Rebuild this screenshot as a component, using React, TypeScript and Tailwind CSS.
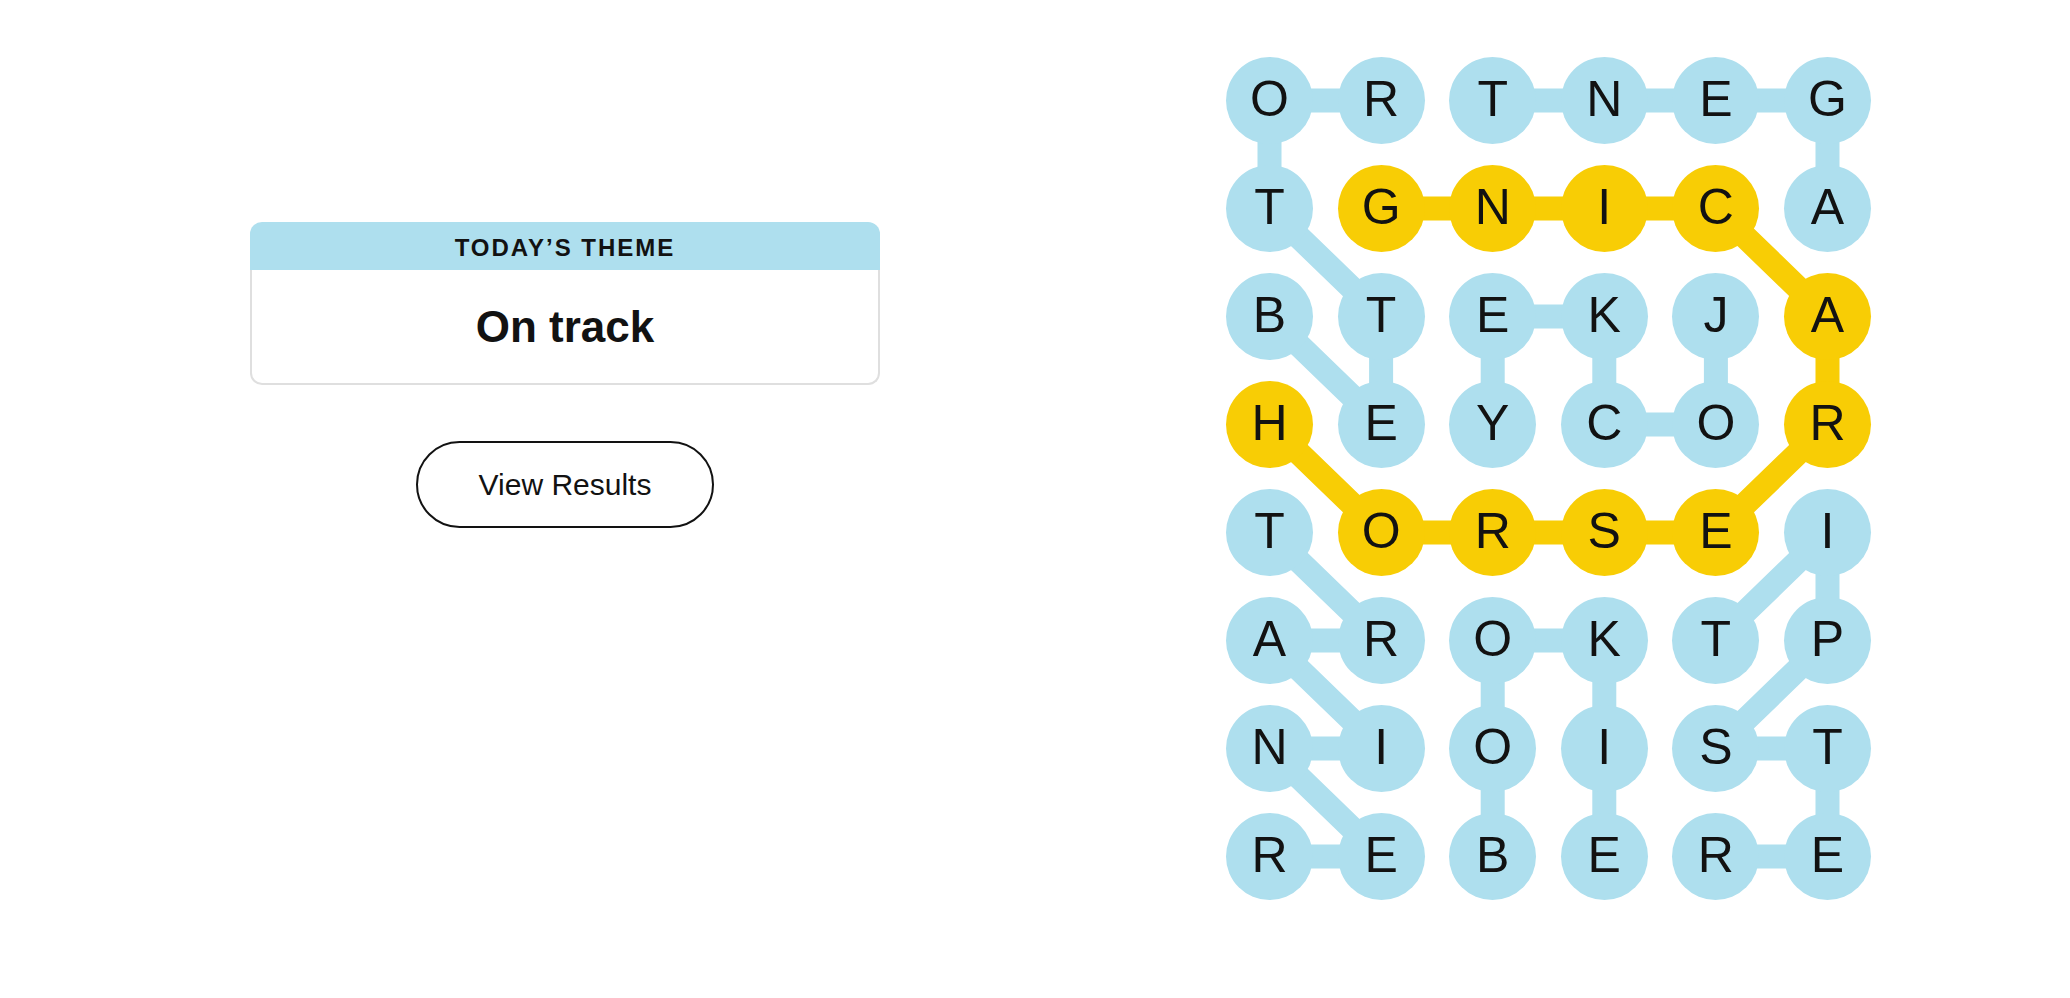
import React from "react";

const LETTERS = [
  ["O", "R", "T", "N", "E", "G"],
  ["T", "G", "N", "I", "C", "A"],
  ["B", "T", "E", "K", "J", "A"],
  ["H", "E", "Y", "C", "O", "R"],
  ["T", "O", "R", "S", "E", "I"],
  ["A", "R", "O", "K", "T", "P"],
  ["N", "I", "O", "I", "S", "T"],
  ["R", "E", "B", "E", "R", "E"],
];

const SPANGRAM: [number, number][] = [
  [3, 0], [4, 1], [4, 2], [4, 3], [4, 4], [3, 5], [2, 5], [1, 4], [1, 3], [1, 2], [1, 1],
];

const WORDS: [number, number][][] = [
  [[2, 0], [3, 1], [2, 1], [1, 0], [0, 0], [0, 1]],
  [[1, 5], [0, 5], [0, 4], [0, 3], [0, 2]],
  [[2, 4], [3, 4], [3, 3], [2, 3], [2, 2], [3, 2]],
  [[7, 2], [6, 2], [5, 2], [5, 3], [6, 3], [7, 3]],
  [[5, 4], [4, 5], [5, 5], [6, 4], [6, 5], [7, 5], [7, 4]],
  [[4, 0], [5, 1], [5, 0], [6, 1], [6, 0], [7, 1], [7, 0]],
];

const COL = 111.6;
const ROW = 108;
const R = 43.5;
const cx = (c: number) => R + c * COL;
const cy = (r: number) => R + r * ROW;

const isSpan = (r: number, c: number) => SPANGRAM.some(([a, b]) => a === r && b === c);

function Path({ pts, color }: { pts: [number, number][]; color: string }) {
  return (
    <polyline
      points={pts.map(([r, c]) => `${cx(c)},${cy(r)}`).join(" ")}
      fill="none"
      stroke={color}
      strokeWidth={24}
      strokeLinejoin="round"
    />
  );
}

function Board() {
  return (
    <div className="relative w-[645px] h-[843px]">
      <svg className="absolute inset-0" width={645} height={843} viewBox="0 0 645 843">
        {WORDS.map((w, i) => (
          <Path key={i} pts={w} color="#aedfee" />
        ))}
        <Path pts={SPANGRAM} color="#f8cd05" />
      </svg>
      <div className="relative grid grid-cols-[repeat(6,87px)] gap-x-[24.6px] gap-y-[21px]">
        {LETTERS.map((row, r) =>
          row.map((ch, c) => (
            <div
              key={`${r}-${c}`}
              className={`flex h-[87px] w-[87px] items-center justify-center rounded-full pb-[4px] text-[50px] leading-none text-[#121212] ${
                isSpan(r, c) ? "bg-[#f8cd05]" : "bg-[#aedfee]"
              }`}
            >
              {ch}
            </div>
          ))
        )}
      </div>
    </div>
  );
}

export default function App() {
  return (
    <div className="flex min-h-[998px] w-[2070px] bg-white font-['Liberation_Sans',Arial,sans-serif] text-[#121212]">
      <div className="flex w-[1130px] flex-col items-center pt-[222px]">
        <div className="w-[630px]">
          <div className="flex h-[48px] items-center justify-center rounded-t-[12px] bg-[#aedfee] pt-[3px]">
            <span className="text-[24px] font-bold leading-none tracking-[2px]">TODAY’S THEME</span>
          </div>
          <div className="flex h-[115px] items-center justify-center rounded-b-[12px] border-2 border-t-0 border-[#dfdfdf]">
            <span className="text-[44px] font-bold leading-none">On track</span>
          </div>
        </div>
        <button className="mt-[56px] flex h-[87px] w-[298px] items-center justify-center rounded-full border-2 border-[#121212] bg-white text-[30px] leading-none text-[#121212]">
          View Results
        </button>
      </div>
      <div className="pl-[96px] pt-[57px]">
        <Board />
      </div>
    </div>
  );
}
